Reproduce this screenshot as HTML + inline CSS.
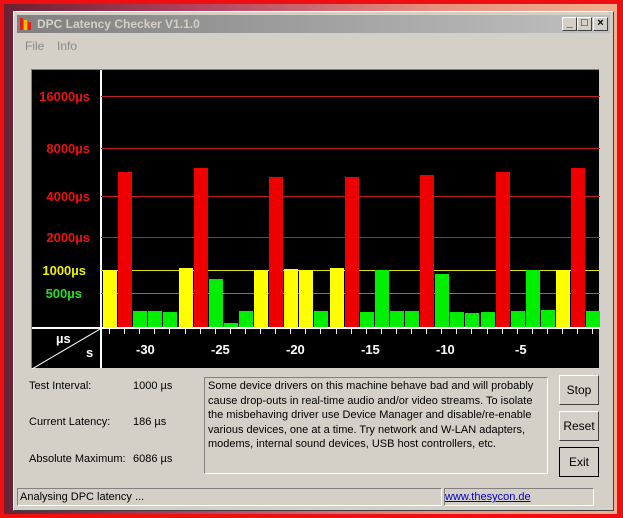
<!DOCTYPE html><html><head><style>
*{margin:0;padding:0;box-sizing:border-box}
body{width:623px;height:518px;overflow:hidden;position:relative;background:linear-gradient(90deg,#6a2030 0%,#b04060 30%,#e89080 70%,#f0b090 100%);font-family:"Liberation Sans",sans-serif;font-size:11px;color:#000}
.frame{position:absolute;left:0;top:0;width:623px;height:518px;border:4px solid #ee1010;border-right-width:6px;border-bottom-width:4px}
.win{position:absolute;left:13px;top:11px;width:601px;height:500px;background:#d4d0c8;border:1px solid #fff;border-right-color:#404040;border-bottom-color:#404040}
.title{position:absolute;left:3px;top:3px;width:593px;height:18px;background:linear-gradient(90deg,#808080,#c0c0c0);color:#d4d0c8;font-weight:bold;font-size:12px;line-height:18px;padding-left:20px}
.tb{position:absolute;top:2px;width:15px;height:14px;background:#d4d0c8;border:1px solid #fff;border-right-color:#404040;border-bottom-color:#404040;color:#000;font-size:11px;line-height:11px;text-align:center}
.menu{position:absolute;top:27px;color:#8a8a8a;font-size:12px}
.chart{position:absolute;left:31px;top:69px;width:568px;height:299px;background:#000;border-top:1px solid #808080;border-left:1px solid #808080}
.abs{position:absolute}
.lab{position:absolute;font-weight:bold;font-size:13px;text-align:right;width:58px;left:0}
.tk{position:absolute;color:#fff;font-weight:bold;font-size:13px;top:272px}
.btn{position:absolute;left:545px;width:40px;height:30px;border:1px solid #fff;border-right-color:#404040;border-bottom-color:#404040;text-align:center;line-height:28px;font-size:12px}
.inf{position:absolute;font-size:11px}
</style></head><body>
<div class="frame"></div>
<div class="win">
<div class="title"><span style="position:absolute;left:3px;top:3px;width:3px;height:12px;background:#e02020"></span><span style="position:absolute;left:7px;top:5px;width:3px;height:10px;background:#f0c000"></span><span style="position:absolute;left:11px;top:7px;width:3px;height:8px;background:#e02020"></span>DPC Latency Checker V1.1.0
<div class="tb" style="left:545px">_</div><div class="tb" style="left:560px">□</div><div class="tb" style="left:576px">×</div></div>
<div class="menu" style="left:11px">File</div><div class="menu" style="left:43px">Info</div>
</div>
<div class="chart">
<div class="abs" style="left:68px;top:0;width:2px;height:298px;background:#fff"></div>
<div class="abs" style="left:0;top:257px;width:568px;height:2px;background:#fff"></div>
<div class="abs" style="left:69px;top:26px;width:499px;height:1px;background:#c02020"></div>
<div class="abs" style="left:69px;top:78px;width:499px;height:1px;background:#c02020"></div>
<div class="abs" style="left:69px;top:126px;width:499px;height:1px;background:#c02020"></div>
<div class="abs" style="left:69px;top:167px;width:499px;height:1px;background:#c02020"></div>
<div class="abs" style="left:69px;top:200px;width:499px;height:1px;background:#e0e000"></div>
<div class="abs" style="left:69px;top:223px;width:499px;height:1px;background:#20b020"></div>
<div class="lab" style="top:19px;color:#ee1010;width:58px">16000µs</div>
<div class="lab" style="top:71px;color:#ee1010">8000µs</div>
<div class="lab" style="top:119px;color:#ee1010">4000µs</div>
<div class="lab" style="top:160px;color:#ee1010">2000µs</div>
<div class="lab" style="top:193px;color:#f0f000;width:54px">1000µs</div>
<div class="lab" style="top:216px;color:#20e020;width:50px">500µs</div>
<svg class="abs" style="left:0;top:259px" width="68" height="40"><line x1="0" y1="40" x2="68" y2="0" stroke="#fff" stroke-width="1"/><text x="24" y="14" fill="#fff" font-family="Liberation Sans" font-weight="bold" font-size="13">µs</text><text x="54" y="28" fill="#fff" font-family="Liberation Sans" font-weight="bold" font-size="13">s</text></svg>
<div id="bars"></div>
<div class="tk" style="left:104px">-30</div><div class="tk" style="left:179px">-25</div><div class="tk" style="left:254px">-20</div><div class="tk" style="left:329px">-15</div><div class="tk" style="left:404px">-10</div><div class="tk" style="left:483px">-5</div>
</div>
<div class="inf" style="left:29px;top:380px">Test Interval:</div><div class="inf" style="left:133px;top:380px">1000 µs</div>
<div class="inf" style="left:29px;top:416px">Current Latency:</div><div class="inf" style="left:133px;top:416px">186 µs</div>
<div class="inf" style="left:29px;top:453px">Absolute Maximum:</div><div class="inf" style="left:133px;top:453px">6086 µs</div>
<div class="abs" style="left:204px;top:377px;width:344px;height:97px;border:1px solid #808080;border-right-color:#fff;border-bottom-color:#fff;padding:1px 3px;font-size:11px;line-height:14.5px">Some device drivers on this machine behave bad and will probably cause drop-outs in real-time audio and/or video streams. To isolate the misbehaving driver use Device Manager and disable/re-enable various devices, one at a time. Try network and W-LAN adapters, modems, internal sound devices, USB host controllers, etc.</div>
<div class="btn" style="left:559px;top:375px">Stop</div>
<div class="btn" style="left:559px;top:411px">Reset</div>
<div class="btn" style="left:559px;top:447px;border:1px solid #000">Exit</div>
<div class="abs" style="left:17px;top:488px;width:425px;height:18px;border:1px solid #808080;border-right-color:#fff;border-bottom-color:#fff;padding-left:2px;line-height:16px">Analysing DPC latency ...</div>
<div class="abs" style="left:444px;top:488px;width:150px;height:18px;border:1px solid #808080;border-right-color:#fff;border-bottom-color:#fff;line-height:16px;color:#0000cc;text-decoration:underline">www.thesycon.de</div>
<script>
(function(){
var d=[['y',270],['r',172],['g',311],['g',311],['g',312],['y',268],['r',168],['g',279],['g',323],['g',311],['y',270],['r',177],['y',269],['y',270],['g',311],['y',268],['r',177],['g',312],['g',270],['g',311],['g',311],['r',175],['g',274],['g',312],['g',313],['g',312],['r',172],['g',311],['g',270],['g',310],['y',270],['r',168],['g',311]];
var c={y:'#ffff00',r:'#ee0000',g:'#00ee00'},h='';
for(var i=0;i<d.length;i++){var x=71+i*15.1,bt=d[i][1]-70;h+='<div class="abs" style="left:'+x.toFixed(1)+'px;top:'+bt+'px;width:14px;height:'+(327-d[i][1])+'px;background:'+c[d[i][0]]+'"></div>';h+='<div class="abs" style="left:'+(x+6).toFixed(1)+'px;top:259px;width:1px;height:5px;background:#fff"></div>';}
document.getElementById('bars').innerHTML=h;
})();
</script>
</body></html>
